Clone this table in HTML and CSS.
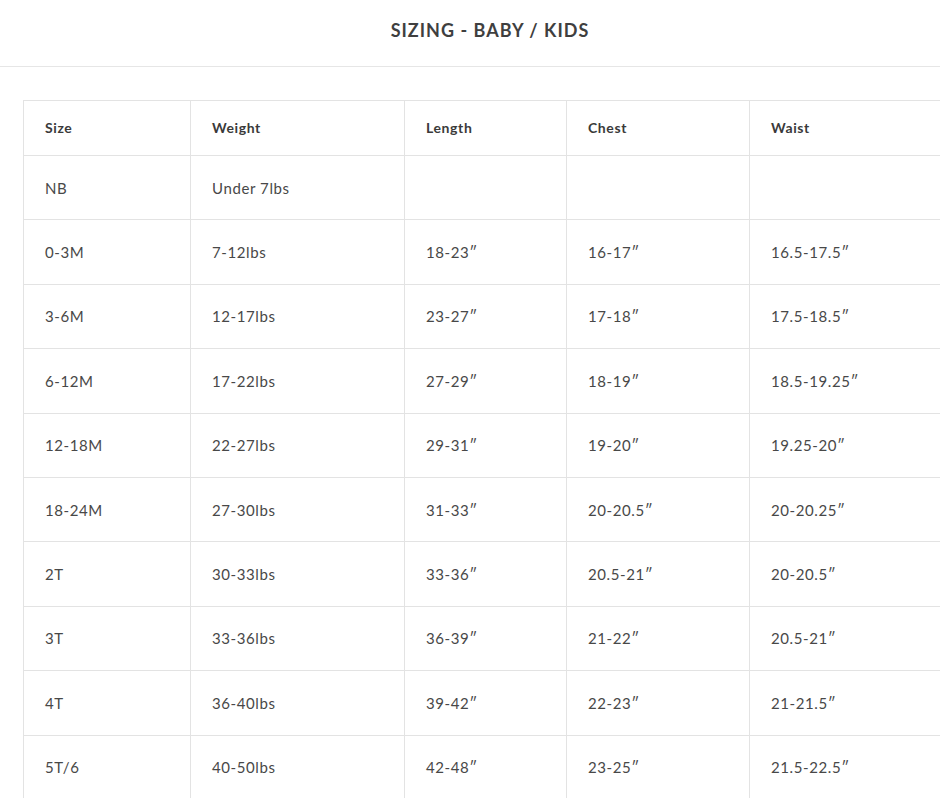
FILE: index.html
```html
<!DOCTYPE html>
<html>
<head>
<meta charset="utf-8">
<link rel="stylesheet" href="styles.css">
</head>
<body>
<header class="page-header">
  <h1 class="title">SIZING - BABY / KIDS</h1>
</header>
<div class="table-wrap">
  <table class="size-table">
    <colgroup>
      <col class="c1"><col class="c2"><col class="c3"><col class="c4"><col class="c5">
    </colgroup>
    <thead>
      <tr><th>Size</th><th>Weight</th><th>Length</th><th>Chest</th><th>Waist</th></tr>
    </thead>
    <tbody>
      <tr><td>NB</td><td>Under 7lbs</td><td></td><td></td><td></td></tr>
      <tr><td>0-3M</td><td>7-12lbs</td><td>18-23″</td><td>16-17″</td><td>16.5-17.5″</td></tr>
      <tr><td>3-6M</td><td>12-17lbs</td><td>23-27″</td><td>17-18″</td><td>17.5-18.5″</td></tr>
      <tr><td>6-12M</td><td>17-22lbs</td><td>27-29″</td><td>18-19″</td><td>18.5-19.25″</td></tr>
      <tr><td>12-18M</td><td>22-27lbs</td><td>29-31″</td><td>19-20″</td><td>19.25-20″</td></tr>
      <tr><td>18-24M</td><td>27-30lbs</td><td>31-33″</td><td>20-20.5″</td><td>20-20.25″</td></tr>
      <tr><td>2T</td><td>30-33lbs</td><td>33-36″</td><td>20.5-21″</td><td>20-20.5″</td></tr>
      <tr><td>3T</td><td>33-36lbs</td><td>36-39″</td><td>21-22″</td><td>20.5-21″</td></tr>
      <tr><td>4T</td><td>36-40lbs</td><td>39-42″</td><td>22-23″</td><td>21-21.5″</td></tr>
      <tr><td>5T/6</td><td>40-50lbs</td><td>42-48″</td><td>23-25″</td><td>21.5-22.5″</td></tr>
    </tbody>
  </table>
</div>
</body>
</html>
```
FILE: styles.css
```css
html, body {
  margin: 0;
  padding: 0;
  background: #fff;
  overflow: hidden;
}
body {
  font-family: Lato, "Open Sans", sans-serif;
  color: #444;
}
.page-header {
  height: 66px;
  border-bottom: 1px solid #e6e6e6;
  box-sizing: content-box;
}
.title {
  margin: 0;
  padding: 18px 0 0 40px;
  line-height: 24px;
  font-size: 18px;
  font-weight: 700;
  letter-spacing: 1px;
  text-align: center;
  color: #3f3f3f;
}
.table-wrap {
  margin-top: 33px;
  padding-left: 23px;
  overflow: hidden;
}
.size-table {
  border-collapse: collapse;
  table-layout: fixed;
  width: 930px;
}
.c1 { width: 167px; }
.c2 { width: 214px; }
.c3 { width: 162px; }
.c4 { width: 183px; }
.c5 { width: 204px; }
.size-table th,
.size-table td {
  border: 1px solid #e3e3e3;
  text-align: left;
  padding: 0 0 0 21px;
  font-size: 15px;
  vertical-align: middle;
  letter-spacing: 0.6px;
}
.size-table th {
  height: 52px;
  font-size: 14px;
  font-weight: 700;
  color: #3a3a3a;
  padding-bottom: 2px;
}
.size-table td {
  height: 63.4px;
  color: #484848;
}
```
